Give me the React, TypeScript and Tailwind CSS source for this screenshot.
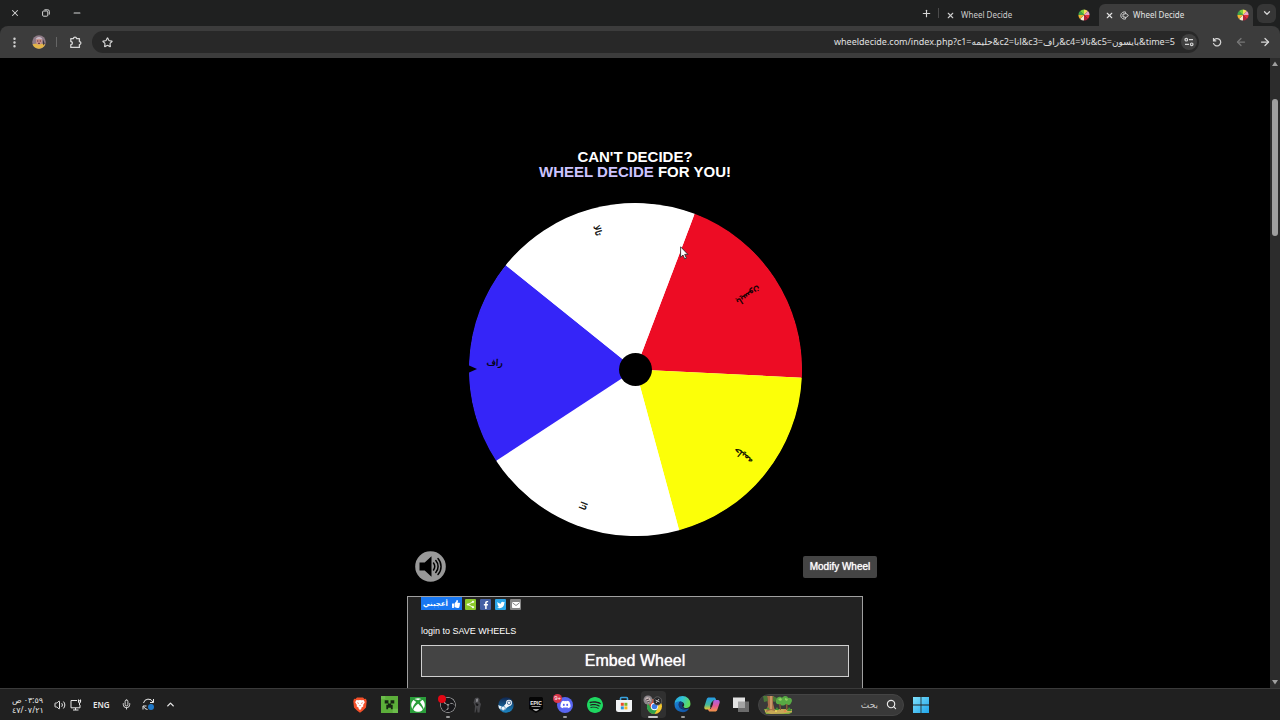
import type { ReactNode } from "react";
import { ArrowLeft, ArrowRight, ChevronDown, ChevronUp, EllipsisVertical, Mic, Minus, Plus, Search, Star, Volume2, X } from "lucide-react";
import { SiBrave, SiSteam, SiObsstudio, SiSpotify } from "react-icons/si";
import { FaDiscord, FaXbox, FaThumbsUp, FaFacebookF, FaTwitter } from "react-icons/fa";

const UI_FONT = "font-['Noto_Sans','DejaVu_Sans',sans-serif]";
const PAGE_FONT = "font-['Liberation_Sans','DejaVu_Sans',sans-serif]";

const SLICE = 72;
const slices = [
  { label: "بايسون", start: -69.2, color: "#ed0c24", dist: 135 },
  { label: "حليمه", start: 2.8, color: "#fcff08", dist: 138 },
  { label: "انا", start: 74.8, color: "#ffffff", dist: 146 },
  { label: "راف", start: 146.8, color: "#3525f8", dist: 141 },
  { label: "تالا", start: 218.8, color: "#ffffff", dist: 144 },
];

function point(c: number, r: number, deg: number) {
  const a = (deg * Math.PI) / 180;
  return `${(c + r * Math.cos(a)).toFixed(2)} ${(c + r * Math.sin(a)).toFixed(2)}`;
}

function wedge(c: number, r: number, start: number, sweep: number) {
  return `M${c} ${c}L${point(c, r, start)}A${r} ${r} 0 0 1 ${point(c, r, start + sweep)}Z`;
}

function Wheel() {
  const c = 167.5;
  return (
    <svg width="334" height="334" viewBox="0 0 334 334" role="img" aria-label="Wheel">
      <circle cx={c} cy={c} r="166" fill="#fff" />
      {slices.map((s) => (
        <path key={s.label} d={wedge(c, 166.5, s.start, SLICE)} fill={s.color} />
      ))}
      {slices.map((s) => (
        <g key={s.label} transform={`rotate(${s.start + SLICE / 2 - 180} ${c} ${c})`}>
          <text x={c - s.dist} y={c + 3} textAnchor="middle" fontSize="9" fill="#000" stroke="#000" strokeWidth=".3" className={PAGE_FONT}>
            {s.label}
          </text>
        </g>
      ))}
      <circle cx={c} cy={c} r="16.5" fill="#000" />
      <path d="M0 163l9 4-9 4z" fill="#000" />
    </svg>
  );
}

const faviconColors = ["#e0303a", "#b3203a", "#f7e9d0", "#f4b430", "#3fa34d", "#7bd040", "#f6e05e", "#e8a0c8"];
function Favicon() {
  return (
    <svg width="12" height="12" viewBox="0 0 12 12" aria-hidden="true">
      {faviconColors.map((f, i) => (
        <path key={f} d={wedge(6, 5.6, i * 45, 45)} fill={f} />
      ))}
    </svg>
  );
}

function Restore() {
  return (
    <svg width="8" height="8" viewBox="0 0 8 8" fill="none" stroke="currentColor">
      <rect x=".6" y="2" width="5.2" height="5.2" rx="1" />
      <path d="M2.4.8h3.4A1.5 1.5 0 0 1 7.3 2.3v3.3" />
    </svg>
  );
}

function Extension() {
  return (
    <svg width="13" height="13" viewBox="0 0 13 13" fill="none" stroke="currentColor" strokeWidth="1.3">
      <path d="M1.8 2.6h2.7a1.5 1.5 0 0 1 3 0h2.9v3a1.5 1.5 0 0 1 0 3V11.4H1.8V8.7a1.6 1.6 0 0 0 0-3.2z" strokeLinejoin="round" />
    </svg>
  );
}

function Avatar() {
  return (
    <svg width="14" height="14" viewBox="0 0 14 14">
      <circle cx="7" cy="7" r="6.8" fill="#8d7a86" />
      <path d="M.6 9.2c3-1 9.300-1 12.600.4A6.800 6.800 0 0 1 .6 9.200z" fill="#e3b548" />
      <ellipse cx="7" cy="6" rx="3" ry="3.800" fill="#c9938c" />
      <path d="M3.600 4.600C4.500 1 9.600 1 10.500 4.600 8.600 3.400 5.600 3.400 3.600 4.600z" fill="#c6bccb" />
      <path d="M5 6h1.400M7.600 6H9M6 8.300h2" stroke="#5b2c36" />
      <path d="M11 4.500l1.600 4-1.300 2z" fill="#2b2430" />
    </svg>
  );
}

function AudioOut() {
  return (
    <svg width="9" height="9" viewBox="0 0 9 9" fill="none" stroke="currentColor">
      <path d="M6 1.300A3.600 3.600 0 1 0 6 7.700M3 3h2.300V1.800L8.400 4.500 5.300 7.200V6H3z" strokeWidth=".9" />
    </svg>
  );
}

function SiteInfo() {
  return (
    <svg width="10" height="10" viewBox="0 0 10 10" fill="none" stroke="currentColor" strokeWidth="1.200">
      <circle cx="2.300" cy="2.700" r="1.300" />
      <path d="M5 2.700h4M1 7.300h4" />
      <circle cx="7.700" cy="7.300" r="1.300" />
    </svg>
  );
}

function Reload() {
  return (
    <svg width="10" height="10" viewBox="0 0 10 10" fill="none" stroke="currentColor" strokeWidth="1.200">
      <path d="M1.500 1v2.800h2.800M1.700 3.600A3.700 3.700 0 1 1 1.400 6" />
    </svg>
  );
}

function Tab({ active = false }: { active?: boolean }) {
  return (
    <div
      className={
        active
          ? "flex h-[22px] w-[154px] items-center rounded-t-md bg-[#3c3c3c] pr-1 pl-1.5 text-[#e3e3e3]"
          : "flex h-[22px] w-[154px] items-center pr-1 pl-1.5 text-[#cccccc]"
      }
    >
      <button aria-label="Close tab" className="mr-1.5">
        <X size={9} strokeWidth={3} />
      </button>
      {active && (
        <span className="mr-1">
          <AudioOut />
        </span>
      )}
      <span className="flex-1 text-[8px] leading-3 whitespace-nowrap">Wheel Decide</span>
      <Favicon />
    </div>
  );
}

function Browser() {
  return (
    <header className={`shrink-0 bg-[#1f2020] text-[#d6d6d6] ${UI_FONT}`}>
      <div className="flex h-[26px] items-center">
        <div className="flex flex-1 items-center gap-[22px] pl-2.5">
          <button aria-label="Close"><X size={10} strokeWidth={2.5} /></button>
          <button aria-label="Restore"><Restore /></button>
          <button aria-label="Minimize"><Minus size={10} strokeWidth={2.5} /></button>
        </div>
        <button aria-label="New tab" className="mr-1.5"><Plus size={11} strokeWidth={2.5} /></button>
        <span className="h-2.5 w-px bg-[#4a4a4a]" />
        <div className="flex items-end gap-[5px] self-end pl-px">
          <Tab />
          <Tab active />
        </div>
        <button aria-label="Search tabs" className="mx-1 flex h-[19px] w-[19px] items-center justify-center rounded-md bg-[#363636]">
          <ChevronDown size={10} strokeWidth={3} />
        </button>
      </div>
      <div className="flex h-8 items-center rounded-t-lg bg-[#3c3c3c]">
        <div className="flex w-[92px] items-center pl-2">
          <button aria-label="Menu"><EllipsisVertical size={13} strokeWidth={2.5} /></button>
          <button aria-label="Profile" className="ml-[11px]"><Avatar /></button>
          <span className="ml-2.5 h-2.5 w-px bg-[#656565]" />
          <button aria-label="Extensions" className="ml-3"><Extension /></button>
        </div>
        <div className="flex h-[22px] flex-1 items-center rounded-full bg-[#282828] pr-0.5 pl-2.5">
          <button aria-label="Bookmark this page"><Star size={11} strokeWidth={2.5} /></button>
          <input
            dir="ltr"
            aria-label="Address"
            defaultValue="wheeldecide.com/index.php?c1=حليمه&c2=انا&c3=راف&c4=تالا&c5=بايسون&time=5"
            className="mr-1.5 min-w-0 flex-1 bg-transparent text-right text-[9px] text-[#e0e0e0] outline-none"
          />
          <button aria-label="Site information" className="flex h-4 w-4 items-center justify-center rounded-full bg-[#414141]"><SiteInfo /></button>
        </div>
        <div className="flex w-[81px] items-center justify-between pr-[9px] pl-[13px]">
          <button aria-label="Reload"><Reload /></button>
          <button aria-label="Forward" className="text-[#777777]"><ArrowLeft size={12} strokeWidth={2.500} /></button>
          <button aria-label="Back"><ArrowRight size={12} strokeWidth={2.500} /></button>
        </div>
      </div>
    </header>
  );
}

function Speaker() {
  return (
    <svg width="31" height="31" viewBox="0 0 31 31">
      <circle cx="15.500" cy="15.500" r="15.300" fill="#999" />
      <path d="M4.500 11.500h5.200l6.800-6.300v20.600l-6.800-6.300H4.500z" fill="#000" />
      <g fill="none" stroke="#000" strokeWidth="1.500" strokeLinecap="round">
        <path d="M18.500 12a6 6 0 0 1 0 7M20.800 9.500a9 9 0 0 1 0 12M23 7.500a12 12 0 0 1 0 16" />
      </g>
    </svg>
  );
}

function ShareLink({ label, children, className }: { label: string; children: ReactNode; className: string }) {
  return (
    <a href="#" aria-label={label} className={`flex h-[11px] w-[11px] items-center justify-center rounded-[1px] text-white ${className}`}>
      {children}
    </a>
  );
}

function Page() {
  return (
    <main className={`flex min-w-0 flex-1 flex-col items-center overflow-hidden bg-black pt-[91px] text-white ${PAGE_FONT}`}>
      <h1 className="text-center text-[15px] leading-[15px] font-bold">
        CAN'T DECIDE?
        <br />
        <a href="#" className="text-[#ccc4ff]">WHEEL DECIDE</a> FOR YOU!
      </h1>
      <div className="relative mt-[23px] shrink-0">
        <Wheel />
        <svg className="absolute top-[44px] left-[212px]" width="9" height="14" viewBox="0 0 9 14">
          <path d="M.6.8v10.400l2.400-2.200 1.700 3.900 1.700-.8-1.700-3.700h3.200z" fill="#fff" stroke="#222" strokeWidth=".8" />
        </svg>
      </div>
      <div className="w-[456px] shrink-0">
        <div className="mt-[15px] ml-2 flex w-[462px] items-center justify-between">
          <button aria-label="Sound"><Speaker /></button>
          <button className="h-[22px] w-[74px] rounded-[2px] bg-[#444] text-[10px] leading-[22px] [text-shadow:0_0_1px_#ffffff]">Modify Wheel</button>
        </div>
        <section className="mt-3.5 h-[200px] border border-[#a0a0a0] bg-[#222] px-[13px]">
          <div className="flex items-start gap-[3px]">
            <button className="flex h-[13px] w-[41px] items-center justify-center gap-1 bg-[#1877f2] text-[7px] leading-none font-bold">
              <span>أعجبني</span>
              <FaThumbsUp size={8} />
            </button>
            <div className="flex gap-1 pt-0.5">
              <ShareLink label="Share" className="bg-[#8cc92b]">
                <svg width="9" height="9" viewBox="0 0 9 9" fill="#fff" stroke="#fff">
                  <path d="M7 1.800L2 4.500l5 2.700" fill="none" strokeWidth=".9" />
                  <circle cx="7" cy="1.800" r=".7" /><circle cx="2" cy="4.500" r=".7" /><circle cx="7" cy="7.200" r=".7" />
                </svg>
              </ShareLink>
              <ShareLink label="Facebook" className="bg-[#4460a5]"><FaFacebookF size={8} /></ShareLink>
              <ShareLink label="Twitter" className="bg-[#2ba5e8]"><FaTwitter size={8} /></ShareLink>
              <ShareLink label="Email" className="bg-[#858585]">
                <svg width="8" height="6" viewBox="0 0 8 6">
                  <rect width="8" height="6" rx=".8" fill="#fff" />
                  <path d="M.5.8L4 3.500 7.500.8" fill="none" stroke="#858585" />
                </svg>
              </ShareLink>
            </div>
          </div>
          <p className="mt-[15px] text-[9px] leading-[12px]">
            <a href="#">login</a> to SAVE WHEELS
          </p>
          <button className="mt-2 h-8 w-full border border-[#d0d0d0] bg-[#444] text-base leading-none [text-shadow:0_0_1px_#ffffff]">
            Embed Wheel
          </button>
        </section>
      </div>
    </main>
  );
}

function ScrollBar() {
  return (
    <div className="flex w-2.5 shrink-0 flex-col items-center justify-between bg-[#2c2c2c] py-[3px]" aria-hidden="true">
      <div className="flex flex-col items-center gap-8">
        <svg width="6" height="6" viewBox="0 0 6 6"><path d="M3 .5L6 5H0z" fill="#9f9f9f" /></svg>
        <div className="h-[137px] w-1.5 rounded-full bg-[#9f9f9f]" />
      </div>
      <svg width="6" height="6" viewBox="0 0 6 6"><path d="M3 5.500L6 1H0z" fill="#9f9f9f" /></svg>
    </div>
  );
}

function Creeper() {
  return (
    <svg width="17" height="17" viewBox="0 0 16 16">
      <path d="M0 0h16v16H0z" fill="#5cae3a" />
      <path d="M0 0h4v3H0zM11 12h5v4h-5z" fill="#6cbc4c" />
      <path d="M3.500 4h3.500v3h2V4h3.500v3H9.500v1.200H11V12.500H9.300v-1.500H6.700v1.500H5V8.200h1.500V7h-3z" fill="#162412" />
    </svg>
  );
}

function Xbox() {
  return (
    <span className="flex h-4 w-4 items-center justify-center bg-[#2a9d3a] text-white">
      <FaXbox size={14} />
    </span>
  );
}

function Obs() {
  return (
    <span className="relative block h-4 w-4">
      <SiObsstudio size={16} className="rounded-full bg-[#17171a] text-[#b9b9b9]" />
      <span className="absolute -top-0.5 -left-0.5 h-2 w-2 rounded-full bg-[#e30613]" />
    </span>
  );
}

function Figure() {
  return (
    <svg width="10" height="16" viewBox="0 0 10 16">
      <path d="M3 1l3-.5 1.500 1.500v3L9 7l-1 4-.5 4.500H5.500L5 10l-1.500 5.500h-1L3 9 1.500 5.500z" fill="#47474a" />
      <path d="M4 2l2-.5v3L4 5z" fill="#85858a" />
      <path d="M3.500 6l3 1-.5 2-2-.5z" fill="#171719" />
    </svg>
  );
}

function Steam() {
  return (
    <svg width="16" height="16" viewBox="0 0 16 16">
      <defs>
        <linearGradient id="steam" x1="0" y1="0" x2="0" y2="1"><stop stopColor="#10264f" /><stop offset="1" stopColor="#1b86c4" /></linearGradient>
        <clipPath id="steamClip"><circle cx="8" cy="8" r="7.700" /></clipPath>
      </defs>
      <circle cx="8" cy="8" r="7.700" fill="url(#steam)" />
      <g clipPath="url(#steamClip)">
        <path d="M0 8l5 2 3-3.500 3-2L13 8l-4 2.500-2 2.500-2 .5L0 11z" fill="#f2f6fa" />
        <circle cx="11" cy="5.800" r="3" fill="#f2f6fa" />
        <circle cx="11" cy="5.800" r="1.700" fill="none" stroke="#1b477c" strokeWidth=".7" />
        <circle cx="5.200" cy="11.300" r="2.100" fill="#f2f6fa" stroke="#1b6aa6" strokeWidth=".6" />
      </g>
    </svg>
  );
}

function Epic() {
  return (
    <svg width="14" height="16" viewBox="0 0 14 16">
      <path d="M1.500 0h11A1.500 1.500 0 0 1 14 1.500V12L7 16l-7-4V1.500A1.500 1.500 0 0 1 1.500 0z" fill="#050505" />
      <text x="7" y="7.500" textAnchor="middle" fontSize="5" fontWeight="700" fill="#eee" className={PAGE_FONT}>EPIC</text>
      <path d="M2.500 9.500h9M4.500 12.500h5L7 13.800z" stroke="#bbb" strokeWidth=".8" fill="#bbb" />
    </svg>
  );
}

function Discord() {
  return (
    <span className="relative flex h-4 w-4 items-center justify-center rounded-full bg-[#5865f2] text-white">
      <FaDiscord size={11} />
      <span className={`absolute -top-[3px] -left-1 flex h-[9px] w-[9px] items-center justify-center rounded-full bg-[#d9364a] text-[6px] leading-none ${PAGE_FONT}`}>9+</span>
    </span>
  );
}

function Store() {
  return (
    <svg width="16" height="17" viewBox="0 0 16 17">
      <path d="M4.500 5V2.500a1 1 0 0 1 1-1h5a1 1 0 0 1 1 1V5" fill="none" stroke="#38a3e0" strokeWidth="1.600" />
      <path d="M0 4h16v9.500a2.500 2.500 0 0 1-2.500 2.500h-11A2.500 2.500 0 0 1 0 13.500z" fill="#f1f3f5" />
      <path d="M4.800 6.800h3v3h-3z" fill="#e84a2a" /><path d="M8.400 6.800h3v3h-3z" fill="#78b52a" />
      <path d="M4.800 10.400h3v3h-3z" fill="#2b93dc" /><path d="M8.400 10.400h3v3h-3z" fill="#f5b71f" />
    </svg>
  );
}

function Chrome() {
  return (
    <svg width="20" height="20" viewBox="0 0 20 20">
      <circle cx="11.500" cy="11.500" r="7.500" fill="#f6c92e" />
      <path d="M11.500 11.500L5 7.700a7.500 7.500 0 0 0 6.500 11.300l3.300-5.700z" fill="#2fa14c" />
      <path d="M5 7.700A7.500 7.500 0 0 1 18 7.700h-6.500l-3.300 5.700z" fill="#dd4434" />
      <circle cx="11.500" cy="11.500" r="3.700" fill="#fff" /><circle cx="11.500" cy="11.500" r="2.800" fill="#3c7ce8" />
      <circle cx="5" cy="5" r="4.500" fill="#8b858a" /><path d="M2 4l2-2 3 1 1 3-3 2z" fill="#c3b3b1" /><path d="M3 5l3-1M4 7l3-1" stroke="#584b52" />
      <circle cx="14.500" cy="6" r="4.200" fill="#29292b" stroke="#777" strokeWidth=".6" /><path d="M12.500 5l4 2M13 8l3-4" stroke="#bbb" />
    </svg>
  );
}

function Edge() {
  return (
    <svg width="17" height="17" viewBox="0 0 17 17">
      <defs>
        <linearGradient id="edgeTop" x1="0" y1="0" x2="1" y2=".4"><stop stopColor="#259de0" /><stop offset=".5" stopColor="#31c3d5" /><stop offset="1" stopColor="#5fdc5a" /></linearGradient>
        <linearGradient id="edgeLow" x1="0" y1="0" x2="1" y2="1"><stop stopColor="#1c86d8" /><stop offset="1" stopColor="#0f4c9c" /></linearGradient>
      </defs>
      <path d="M.5 8A8 8 0 0 1 16.500 8c0 2.800-2 4-4.300 4-2 0-2.700-.8-2.700-1.300 0-.6.700-.9.700-2C10.200 7 8.600 5.800 6.500 5.800 3.400 5.800.8 7.200.5 8z" fill="url(#edgeTop)" />
      <path d="M.5 8C1.400 5.600 4 4.900 6.500 5.300 5 6.500 4.500 8.200 5 10c.8 3 4.500 4.700 10.300 2.300A8 8 0 0 1 .5 8z" fill="url(#edgeLow)" />
      <path d="M6.500 5.300C4.500 6.600 4.200 8.500 5 10.300c1.200 2.600 4.700 4.100 9.900 2.200-3.300.9-6.200-.3-6.700-2.600-.2-1 .4-1.600.8-2.200C8.600 6.500 7.600 5.600 6.500 5.300z" fill="#123b7c" />
    </svg>
  );
}

function Copilot() {
  return (
    <svg width="16" height="15" viewBox="0 0 16 15">
      <defs>
        <linearGradient id="copA" x1="0" y1="0" x2="0" y2="1"><stop stopColor="#249be8" /><stop offset=".6" stopColor="#43b89a" /><stop offset="1" stopColor="#f0c62f" /></linearGradient>
        <linearGradient id="copB" x1="0" y1="0" x2="0" y2="1"><stop stopColor="#a560e6" /><stop offset=".5" stopColor="#e35a96" /><stop offset="1" stopColor="#f39645" /></linearGradient>
      </defs>
      <path d="M5 .5h5c1 0 1.500.6 1.800 1.500l.4 1.500H10c-1 0-1.600.6-1.900 1.500L6.300 11c-.4 1-1 1.500-2 1.500H2C.4 12.500 0 11 .4 9.500L2.600 2.500C3 1.100 3.800.5 5 .5z" fill="url(#copA)" />
      <path d="M11 14.500H6c-1 0-1.500-.6-1.800-1.500l-.3-1h1.500c1 0 1.700-.7 2-1.600L9.300 4.500c.3-1 1-1.500 2-1.500H14c1.600 0 2 1.500 1.600 3l-2.200 6.500c-.4 1.400-1.200 2-2.400 2z" fill="url(#copB)" />
      <path d="M7.300 5.500h2L8 9.800H6z" fill="#222" />
    </svg>
  );
}

function TaskView() {
  return (
    <svg width="16" height="15" viewBox="0 0 16 15">
      <path d="M5 4.500h11V15H5z" fill="#6b6b6b" />
      <path d="M0 .5h12V11H0z" fill="#e2e2e2" />
      <path d="M5 4.500h7V11H5z" fill="#a4a4a4" />
    </svg>
  );
}

function Brave() {
  return (
    <svg width="14" height="16" viewBox="0 0 14 16">
      <path d="M4 .5h6l1.500 1.500 1.500-.2.7 2.400-.7 6.300L10 13.500 7 15.700l-3-2.200-3-3L.3 4.200 1 1.800l1.500.2z" fill="#f4502a" />
      <path d="M3.500 3l1.700.3L7 2.900l1.800.4 1.700-.3 1.300 2.300-1.700 2.700.3 1.300L7 11.700 3.600 9.300 3.900 8 2.200 5.300z" fill="#fff" />
      <path d="M3.800 5.300l2 .7-.4 1zM10.200 5.300l-2 .7.4 1zM6.300 8h1.400L7 9.600z" fill="#f4502a" />
      <path d="M5.300 11.500L7 10.700l1.700.8L7 12.900z" fill="#fff" />
    </svg>
  );
}

const apps: { name: string; icon: ReactNode; mark?: "dot" | "active" }[] = [
  { name: "Brave", icon: <Brave /> },
  { name: "Minecraft", icon: <Creeper /> },
  { name: "Xbox", icon: <Xbox /> },
  { name: "OBS Studio", icon: <Obs />, mark: "dot" },
  { name: "Game", icon: <Figure /> },
  { name: "Steam", icon: <Steam /> },
  { name: "Epic Games", icon: <Epic /> },
  { name: "Discord", icon: <Discord />, mark: "dot" },
  { name: "Spotify", icon: <SiSpotify size={16} className="text-[#1ed760]" /> },
  { name: "Microsoft Store", icon: <Store /> },
  { name: "Chrome", icon: <Chrome />, mark: "active" },
  { name: "Edge", icon: <Edge />, mark: "dot" },
  { name: "Copilot", icon: <Copilot /> },
  { name: "Task view", icon: <TaskView /> },
];

function SearchArt() {
  return (
    <svg width="30" height="19" viewBox="0 0 30 19">
      <path d="M1 14h28v3.500L26 19H3z" fill="#7fae3c" />
      <path d="M2 15l5-2 5 3 6-2 11 1v2l-9 1.500L8 19l-6-2z" fill="#c8a857" />
      <path d="M4 1h7l-1 7 2 8-4-1-5 2 2-7z" fill="#a8704a" />
      <path d="M7 1h2v13H7z" fill="#c99868" />
      <path d="M0 1h4l1 5-4 1zM10 1l4 2-2 4-2-1z" fill="#4b7838" />
      <path d="M13 5c1-4 5-4 6-2 2-3 6-2 6 0 4-1 5 3 3 5-1 3-4 2-5 1-2 2-5 2-6 0-3 1-5-1-4-4z" fill="#58a944" />
      <path d="M15 4l3-1 1 2-2 1zM22 3l3 1-1 2-2-1z" fill="#91d163" />
      <path d="M16 9l1 6h1l-.5-6zM23 9v6h1.500V9z" fill="#875c35" />
      <path d="M3 14l2-2 2 3zM12 15l2-3 2 3zM24 16l2-4 3 4z" fill="#3f8c32" />
      <circle cx="13" cy="16" r="1" fill="#eed85b" /><circle cx="22" cy="16" r="1" fill="#e9804b" />
    </svg>
  );
}

function Network() {
  return (
    <svg width="12" height="12" viewBox="0 0 12 12" fill="none" stroke="currentColor">
      <path d="M7 1.500H1v7.300h9V6M3 11h5.500M5.500 9v2M8.500.5v2.500a1 1 0 0 0 2 0V.5M7.900 1.800h3.300M9.500 3.800V6" />
    </svg>
  );
}

function Sync() {
  return (
    <svg width="13" height="13" viewBox="0 0 13 13" fill="none" stroke="currentColor">
      <path d="M1.500 5A5 5 0 0 1 11 4.200M11.500 1v3.500H8M1 11.500V8h3.500M1.500 8.500A5 5 0 0 0 5.500 11.500" />
      <circle cx="9" cy="9" r="3" fill="#1e78c8" stroke="none" />
    </svg>
  );
}

function Taskbar() {
  return (
    <footer className={`flex h-8 shrink-0 items-center border-t border-[#3a3a3a] bg-[#202020] text-[#e8e8e8] ${UI_FONT}`}>
      <div className="flex flex-1 items-center pl-3">
        <time dir="rtl" className="mr-[11px] w-[31px] text-right text-[8px] leading-[10px] whitespace-nowrap">
          <span className="block">٠٣:٥٩ ص</span>
          <span className="block" dir="ltr">٤٧/٠٧/٢١</span>
        </time>
        <Volume2 size={12} strokeWidth={2} />
        <span className="ml-1"><Network /></span>
        <span className="ml-[11px] text-[8px] leading-3 font-semibold">ENG</span>
        <Mic size={11} className="ml-[11px] shrink-0" />
        <span className="ml-2.5"><Sync /></span>
        <ChevronUp size={11} strokeWidth={3} className="ml-2.5 shrink-0" />
      </div>
      <nav aria-label="Taskbar" className="flex items-center">
        <div className="grid w-[411px] grid-cols-14">
          {apps.map((app) => (
            <button
              key={app.name}
              aria-label={app.name}
              className={
                app.mark === "active"
                  ? "relative mx-0.5 flex h-[27px] items-center justify-center rounded-sm bg-[#303030]"
                  : "relative mx-0.5 flex h-[27px] items-center justify-center"
              }
            >
              {app.icon}
              {app.mark && (
                <span
                  className={
                    app.mark === "active"
                      ? "absolute bottom-0 h-0.5 w-2.5 rounded-full bg-[#c9c9c9]"
                      : "absolute bottom-0 h-0.5 w-1 rounded-full bg-[#9a9a9a]"
                  }
                />
              )}
            </button>
          ))}
        </div>
        <div className="ml-0.5 flex h-[22px] w-[146px] items-center rounded-full border border-[#444] bg-[#393939] pr-1.5 pl-1">
          <SearchArt />
          <input dir="rtl" aria-label="Search" placeholder="بحث" className="mr-2 min-w-0 flex-1 bg-transparent text-[9px] placeholder:text-[#c8c8c8] outline-none" />
          <Search size={11} strokeWidth={2.500} className="shrink-0" />
        </div>
        <button aria-label="Start" className="ml-0.5 flex w-[29px] justify-center">
          <svg width="16" height="16" viewBox="0 0 16 16">
            <defs><linearGradient id="win" x1="0" y1="0" x2="1" y2="1"><stop stopColor="#7fe0fb" /><stop offset="1" stopColor="#1fa5ea" /></linearGradient></defs>
            <path d="M0 0h7.600v7.600H0zM8.400 0H16v7.600H8.400zM0 8.400h7.600V16H0zM8.400 8.400H16V16H8.400z" fill="url(#win)" />
          </svg>
        </button>
      </nav>
      <div className="flex-1 pr-3" />
    </footer>
  );
}

export default function App() {
  return (
    <div className="flex h-screen flex-col overflow-hidden bg-black">
      <Browser />
      <div className="flex min-h-0 flex-1">
        <Page />
        <ScrollBar />
      </div>
      <Taskbar />
    </div>
  );
}
